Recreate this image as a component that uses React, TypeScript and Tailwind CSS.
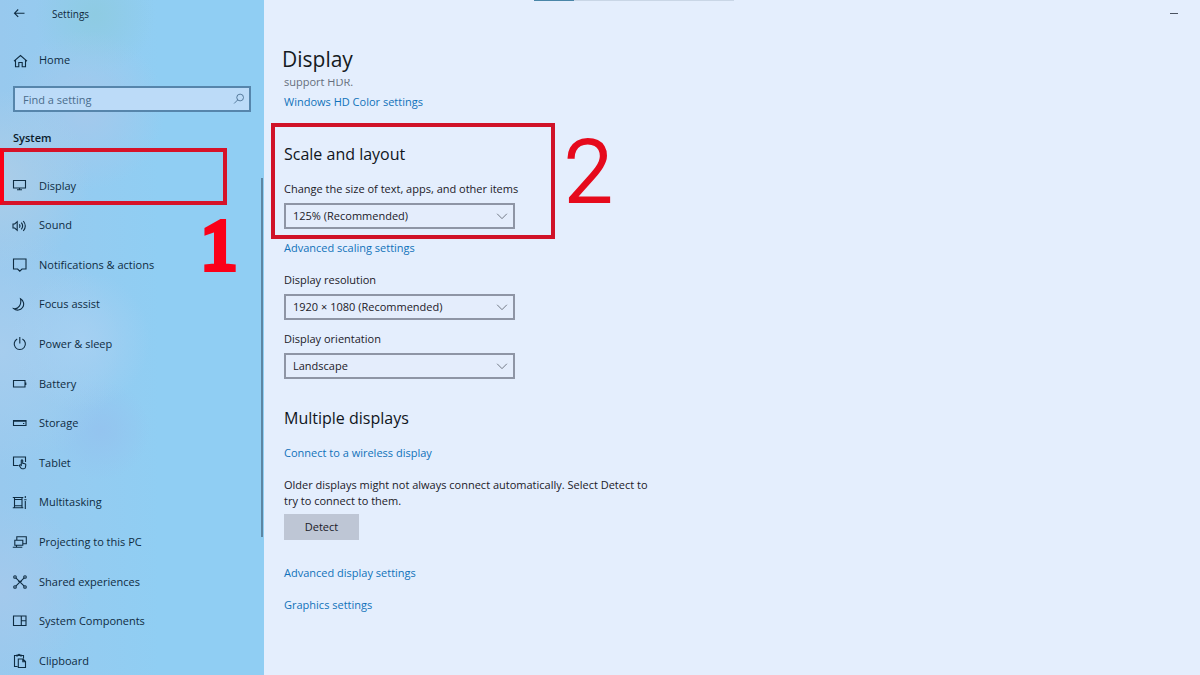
import React from 'react'

type IconProps = { children: React.ReactNode; className?: string }

function Icon({ children, className = 'size-4' }: IconProps) {
  return (
    <svg
      className={`shrink-0 ${className}`}
      viewBox="0 0 16 16"
      fill="none"
      stroke="currentColor"
      strokeWidth="1.1"
      aria-hidden="true"
    >
      {children}
    </svg>
  )
}

const NAV_ITEMS = [
  { label: 'Display', icon: <path d="M1.5 2.500h12v7.500h-12zM7.500 10v1.800M5 11.800h5" /> },
  {
    label: 'Sound',
    icon: (
      <path d="M1 6v4h1.700l2.500 2.300v-8.600L2.700 6zM7.300 6.300q1.300 1.700 0 3.400M9.300 4.700q2.700 3.300 0 6.600M11.300 3q4 5 0 10" />
    ),
  },
  { label: 'Notifications & actions', icon: <path d="M1.500 2h12.500v10h-4L7.800 14.200 5.600 12H1.500z" /> },
  {
    label: 'Focus assist',
    icon: <path d="M8.500 1.800a6 6 0 1 1-6.800 9.800C6.500 12.400 9.800 7.500 8.500 1.800z" />,
  },
  { label: 'Power & sleep', icon: <path d="M7.800 1v6.500M5.200 3a5.600 5.600 0 1 0 5.200 0" /> },
  { label: 'Battery', icon: <path d="M1.500 4.500h11.500v6.500h-11.500zM13.800 6.500v2.500" /> },
  { label: 'Storage', icon: <path d="M1.500 5.500h12.500v5h-12.500zM1.500 6.300h12.500M11 8.500h1.300" /> },
  {
    label: 'Tablet',
    icon: (
      <path d="M6.300 10.500H1.500v-8.500h12v5M9.300 10V5.300q.7-1 1.400 0v3l2.200.4q1 .2.900 1.300l-.4 2.500q-.3 1.300-1.600 1.300h-1.500q-.9 0-1.400-.8l-1.700-2.500q.8-1 2.100-.200z" />
    ),
  },
  {
    label: 'Multitasking',
    icon: (
      <path d="M2.500 2.500v10.300M10 2.500v10.300M2.500 4.500h7.500M2.500 10.800h7.500M.8 2.500h10.500M.8 12.800h10.500M13.300 1v2M13.300 6v8M12.200 4.700h2.300" />
    ),
  },
  {
    label: 'Projecting to this PC',
    icon: <path d="M4.800 6V2.800h9.500v7h-3.500M2.800 6.300h8v5h-8zM.8 13.200h9.500M4.500 11.500v1.500" />,
  },
  {
    label: 'Shared experiences',
    icon: (
      <>
        <path d="M3.800 3.800l8.400 8.400M12.200 3.800l-8.400 8.400M6 7.200h4" />
        <circle cx="3" cy="3" r="1.300" />
        <circle cx="13" cy="3" r="1.300" />
        <circle cx="3" cy="13" r="1.300" />
        <circle cx="13" cy="13" r="1.300" />
      </>
    ),
  },
  { label: 'System Components', icon: <path d="M1.500 3h12.500v9.500h-12.500zM9.300 3v9.500M9.300 7.800h4.700" /> },
  {
    label: 'Clipboard',
    icon: (
      <path d="M5.500 13.500H2.500v-11h9v3M5 3.800V2h1.300q.7-1.500 1.500 0H9v1.800M6.300 14.500V6h4.700l2.500 2.500v6zM10.800 6v2.800h2.700" />
    ),
  },
]

function Sidebar() {
  return (
    <aside className="relative flex w-[264px] shrink-0 flex-col bg-[#90cef3] bg-[radial-gradient(circle_at_0px_180px,#abcde8_0,#abcde800_90px),radial-gradient(circle_at_85px_110px,#a4c9ec_0,#a4c9ec00_80px),radial-gradient(circle_at_95px_15px,#8ecbe2_0,#8ecbe200_60px),radial-gradient(circle_at_80px_340px,#a5d0f2_0,#a5d0f200_70px),radial-gradient(circle_at_0px_350px,#a6cdee_0,#a6cdee00_120px),radial-gradient(circle_at_100px_430px,#94c4ef_0,#94c4ef00_50px),radial-gradient(circle_at_0px_590px,#a3c9ec_0,#a3c9ec00_90px),linear-gradient(90deg,#98c9ee,#98c9ee00_60%)] text-[#0f2c42]">
      <header className="flex h-7 items-center gap-6 px-3">
        <button type="button" aria-label="Back">
          <Icon>
            <path d="M12.500 7.200H2.500M6.200 3.500L2.500 7.200l3.700 3.700" />
          </Icon>
        </button>
        <span className="text-[10px] text-[#10283c]">Settings</span>
      </header>

      <a href="#home" className="mt-5 flex h-6 items-center gap-[11px] px-3 pt-px text-[11px]">
        <Icon>
          <path d="M2 8.200L8.500 2.500 15 8.200M3.500 7v6.800h3.300V9.500h3.400v4.300h3.300V7" />
        </Icon>
        Home
      </a>

      <div className="relative mx-[13px] mt-3.5">
        <input
          type="text"
          aria-label="Find a setting"
          placeholder="Find a setting"
          className="block h-[26px] w-full rounded-none border-2 border-[#5685ab] bg-[#bcdbf8] pr-7 pl-2 text-[11px] outline-none placeholder:text-[#4a6c8c]"
        />
        <Icon className="absolute top-[7px] right-1.5 size-3 text-[#41678a]">
          <circle cx="9.500" cy="6" r="4.500" />
          <path d="M6.300 9.200L1.500 14" />
        </Icon>
      </div>

      <h2 className="mt-[18px] px-[13px] text-[11px] leading-4 font-semibold text-[#0a1c2c]">System</h2>

      <nav className="mt-[26px] flex flex-1 flex-col justify-between">
        {NAV_ITEMS.map((item) => (
          <a
            key={item.label}
            href="#"
            className="flex h-7 items-center gap-[11px] px-3 text-[11px]"
          >
            <Icon>{item.icon}</Icon>
            {item.label}
          </a>
        ))}
      </nav>

      {/* scrollbar */}
      <div className="absolute top-[178px] right-px h-[359px] w-0.5 bg-[#5d86a3]" />

      {/* step 1 */}
      <div className="absolute top-[148px] left-0 h-[57px] w-[227px] border-4 border-[#d61228] border-l-[#fa0016]" />
      <span className="absolute top-[205px] left-[201px] font-['Liberation_Serif',serif] text-[72px] leading-20 text-[#fb0018] [-webkit-text-stroke:6px_#fb0018]">
        1
      </span>
    </aside>
  )
}

type SelectProps = { id: string; label: string; value: string }

function SelectField({ id, label, value }: SelectProps) {
  return (
    <div className="flex w-[231px] flex-col">
      <label htmlFor={id} className="whitespace-nowrap">
        {label}
      </label>
      <div className="relative mt-1.5">
        <select
          id={id}
          className="block h-[26px] w-full appearance-none rounded-none border-2 border-[#8e95a5] bg-[#e4edfc] pr-7 pl-[7px] outline-none"
        >
          <option>{value}</option>
        </select>
        <Icon className="pointer-events-none absolute top-[7px] right-[7px] size-3 text-[#59606c]">
          <path d="M1.500 5l6.500 6.500L14.500 5" />
        </Icon>
      </div>
    </div>
  )
}

function SettingsLink({ children }: { children: React.ReactNode }) {
  return (
    <a href="#" className="self-start text-[#1072ba]">
      {children}
    </a>
  )
}

export default function App() {
  return (
    <div className="flex h-screen overflow-hidden bg-[#e4eefd] font-['Open_Sans',sans-serif]">
      <Sidebar />

      <main className="relative flex min-w-0 flex-1 flex-col px-5 text-[11px] leading-4 text-[#1b2028]">
        <div className="absolute top-0 left-[270px] flex h-px w-[200px] bg-[#c9d6e6]">
          <div className="w-10 bg-[#4a86a8]" />
        </div>
        <button type="button" aria-label="Minimize" className="absolute top-[7px] right-5 flex h-3 w-3 items-center justify-center">
          <span className="h-px w-2 bg-[#4a5260]" />
        </button>

        <h1 className="mt-[45px] -ml-0.5 text-[21px] leading-7 text-[#151a21]">Display</h1>

        {/* scrolled content, the first line is half hidden under the title */}
        <div className="mt-1.5 h-[11px] overflow-hidden">
          <p className="-mt-[5px] text-[#666e7c]">support HDR.</p>
        </div>

        <div className="mt-1 flex flex-col">
          <SettingsLink>Windows HD Color settings</SettingsLink>

          <section className="relative mt-8 flex flex-col">
            <h2 className="mb-[15px] text-base leading-6 text-[#10151c]">Scale and layout</h2>
            <SelectField id="scale" label="Change the size of text, apps, and other items" value="125% (Recommended)" />
            {/* step 2 */}
            <div className="pointer-events-none absolute -top-[19px] -left-[13px] h-[116px] w-[284px] border-4 border-[#d01228]" />
            <span className="pointer-events-none absolute -top-[18px] left-[280px] font-[Roboto,sans-serif] text-[88px] leading-24 font-light text-[#e60a1c] [-webkit-text-stroke:2px_#e60a1c]">
              2
            </span>
          </section>

          <div className="mt-[11px] mb-4 flex">
            <SettingsLink>Advanced scaling settings</SettingsLink>
          </div>
          <div className="flex flex-col gap-[11px]">
            <SelectField id="resolution" label="Display resolution" value="1920 × 1080 (Recommended)" />
            <SelectField id="orientation" label="Display orientation" value="Landscape" />
          </div>

          <h2 className="mt-[27px] mb-[15px] text-base leading-6 text-[#10151c]">Multiple displays</h2>
          <SettingsLink>Connect to a wireless display</SettingsLink>
          <p className="mt-4 max-w-[376px]">
            Older displays might not always connect automatically. Select Detect to try to connect to them.
          </p>
          <button type="button" className="mt-[5px] h-[26px] w-[75px] bg-[#bec6d5]">
            Detect
          </button>

          <div className="mt-[25px] flex flex-col gap-4">
            <SettingsLink>Advanced display settings</SettingsLink>
            <SettingsLink>Graphics settings</SettingsLink>
          </div>
        </div>
      </main>
    </div>
  )
}
